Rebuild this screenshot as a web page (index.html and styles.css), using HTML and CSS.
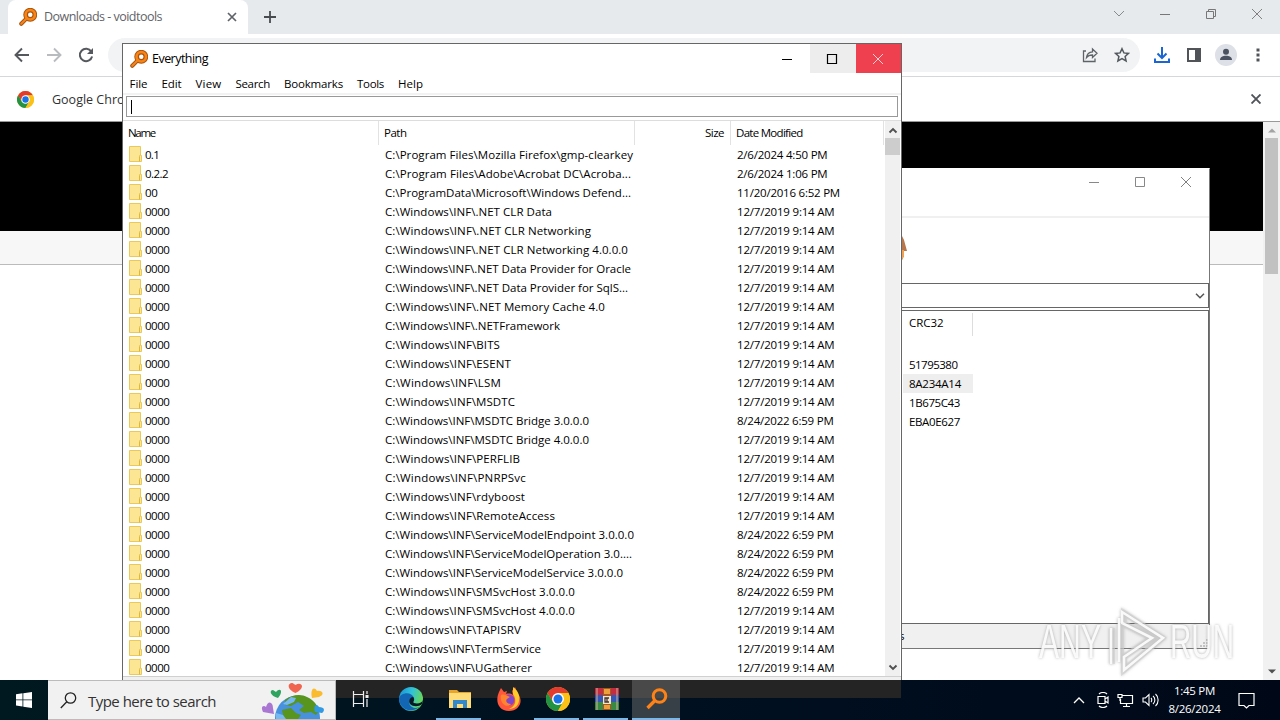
FILE: index.html
```html
<!DOCTYPE html>
<html lang="en">
<head>
<meta charset="utf-8">
<title>Desktop</title>
<link rel="stylesheet" href="styles.css">
</head>
<body>
<svg width="0" height="0" class="defs">
  <defs>
    <symbol id="lens" viewBox="0 0 16 16"><path d="M2 14 7 9" stroke="#a8540f" stroke-width="3.600" stroke-linecap="round"/><circle cx="10" cy="6" r="4.100" fill="#fff" stroke="#a8540f" stroke-width="4.200"/><path d="M2 14 7 9" stroke="#f5851c" stroke-width="1.800" stroke-linecap="round"/><circle cx="10" cy="6" r="4.200" fill="none" stroke="#f98414" stroke-width="2.300"/></symbol>
    <symbol id="chrome" viewBox="0 0 24 24"><circle cx="12" cy="12" r="12" fill="#fbc116"/><path d="M1.600 6A12 12 0 0 1 22.400 6L12 6.500 6.800 15z" fill="#e33b2e"/><path d="M1.600 6A12 12 0 0 0 12 24l5-9-10 0z" fill="#229342"/><path d="M22.400 6H12v6l5.200 3L12 24A12 12 0 0 0 22.400 6z" fill="#fbc116"/><circle cx="12" cy="12" r="6" fill="#fff"/><circle cx="12" cy="12" r="4.500" fill="#1a73e8"/></symbol>
    <symbol id="x" viewBox="0 0 12 12"><path d="M1 1l10 10M11 1L1 11" fill="none" stroke="currentColor"/></symbol>
  </defs>
</svg>
<div class="desktop">
  <section class="browser">
    <div class="tabs">
      <div class="tab"><svg class="i18"><use href="#lens"/></svg><span class="tab-title" data-w="118">Downloads - voidtools</span><svg class="tab-x" viewBox="0 0 10 10"><path d="M1 1l8 8M9 1L1 9" stroke="#5f6368" stroke-width="1.700"/></svg></div>
      <svg class="plus" viewBox="0 0 12 12"><path d="M6 0v12M0 6h12" stroke="#484c50" stroke-width="1.800"/></svg>
      <div class="frame">
        <svg width="12" height="12" viewBox="0 0 12 12"><path d="M1 3l5 5 5-5" fill="none" stroke="#888b8e"/></svg>
        <svg width="12" height="12" viewBox="0 0 12 12"><path d="M1 6.500h10" stroke="#777"/></svg>
        <svg width="12" height="12" viewBox="0 0 12 12"><path d="M1.500 3.500h7v7h-7zM3.500 3.500v-2h7v7h-2" fill="none" stroke="#777"/></svg>
        <svg width="12" height="12" class="dim"><use href="#x"/></svg>
      </div>
    </div>
    <div class="toolbar">
      <svg width="16" height="16" viewBox="0 0 16 16"><path d="M15 8H2M8 1.500L1.500 8 8 14.500" fill="none" stroke="#55595e" stroke-width="1.900"/></svg>
      <svg width="16" height="16" viewBox="0 0 16 16"><path d="M1 8h13M8 1.500L14.500 8 8 14.500" fill="none" stroke="#b9bcbf" stroke-width="1.900"/></svg>
      <svg width="16" height="16" viewBox="0 0 16 16"><path d="M13.300 4.600A6.200 6.200 0 1 0 14.100 9.500" fill="none" stroke="#55595e" stroke-width="2"/><path d="M15 1v6H9z" fill="#55595e"/></svg>
      <div class="omnibox">
        <svg width="17" height="16" viewBox="0 0 17 16"><path d="M4 4H1.500v10.500h11.500v-3M4.500 10.500c.5-4 3-5.500 6-5.700V2l4.500 4.300-4.500 4.200V8c-2.500 0-4.500.5-6 2.500z" fill="none" stroke="#5f6368" stroke-width="1.300"/></svg>
        <svg width="16" height="16" viewBox="0 0 16 16"><path d="M8 1.700l1.900 4.200 4.600.5-3.400 3.100 1 4.500L8 11.700 3.900 14l1-4.500L1.500 6.400l4.600-.5z" fill="none" stroke="#55595e" stroke-width="1.500"/></svg>
      </div>
      <svg class="dl" width="18" height="18" viewBox="0 0 18 18"><path d="M9 1v11M4.500 7.500L9 12l4.500-4.500M2 12.500V16h14v-3.500" fill="none" stroke="#1b66d2" stroke-width="2"/></svg>
      <svg class="panel" width="14" height="14" viewBox="0 0 14 14"><path d="M1 1h12v12H1z" fill="none" stroke="#505459" stroke-width="2"/><path d="M8 1h5v12H8z" fill="#505459"/></svg>
      <svg class="person" width="22" height="22" viewBox="0 0 22 22"><circle cx="11" cy="11" r="11" fill="#dde0e6"/><circle cx="11" cy="7.700" r="3" fill="#4b5261"/><path d="M5 16c0-3 3-4.200 6-4.200s6 1.200 6 4.200z" fill="#4b5261"/></svg>
      <svg class="dots" width="4" height="14" viewBox="0 0 4 14"><path d="M.5.5h3v3h-3zM.5 5.500h3v3h-3zM.5 10.500h3v3h-3z" fill="#505459"/></svg>
    </div>
    <div class="infobar"><svg class="i17"><use href="#chrome"/></svg><span>Google Chrome</span><svg class="info-x" viewBox="0 0 10 10"><path d="M.5.5l9 9M9.500.5l-9 9" stroke="#505459" stroke-width="1.900"/></svg></div>
    <div class="view">
      <div class="site"><div class="hero"></div><div class="strip"></div></div>
      <div class="page-scroll"><svg width="8" height="5" viewBox="0 0 8 5"><path d="M0 4.500L4 .5l4 4z" fill="#a3a3a3"/></svg><div class="page-thumb"></div><svg width="8" height="5" viewBox="0 0 8 5"><path d="M0 .5l4 4 4-4z" fill="#505050"/></svg></div>
    </div>
  </section>

  <section class="archive">
    <div class="a-title">
      <svg width="12" height="12" viewBox="0 0 12 12"><path d="M1 6.500h10" stroke="#888"/></svg>
      <svg width="12" height="12" viewBox="0 0 12 12"><path d="M1.500 1.500h9v9h-9z" fill="none" stroke="#888"/></svg>
      <svg width="12" height="12" class="dim"><use href="#x"/></svg>
    </div>
    <div class="a-tools"><svg width="6" height="24" viewBox="0 0 6 24"><path d="M0 0l2 4 3 11H2v5l-2 4z" fill="#b8764c"/><path d="M0 14h2v6l-2 4z" fill="#f0a050"/></svg></div>
    <div class="a-combo"><svg width="10" height="6" viewBox="0 0 10 6"><path d="M1 .7l4 4 4-4" fill="none" stroke="#555" stroke-width="1.500"/></svg></div>
    <div class="a-list">
      <div class="a-head"><span data-w="34.500">CRC32</span></div>
      <div class="a-row"><span data-w="48.500">51795380</span></div>
      <div class="a-row sel"><span data-w="52">8A234A14</span></div>
      <div class="a-row"><span data-w="51">1B675C43</span></div>
      <div class="a-row"><span data-w="51">EBA0E627</span></div>
    </div>
    <div class="a-status"><span>s</span><svg width="10" height="10" viewBox="0 0 10 10"><path d="M1 7h2v2H1zM4 7h2v2H4zM7 7h2v2H7zM4 4h2v2H4zM7 4h2v2H7zM7 1h2v2H7z" fill="#c4c4c4"/></svg></div>
  </section>

  <section class="everything">
    <div class="titlebar"><svg class="i18"><use href="#lens"/></svg><span data-w="56">Everything</span>
      <div class="btn"><svg width="12" height="12" viewBox="0 0 12 12"><path d="M1 6.500h10" stroke="#000"/></svg></div>
      <div class="btn hover"><svg width="12" height="12" viewBox="0 0 12 12"><path d="M1.500 1.500h9v9h-9z" fill="none" stroke="#000" stroke-width="1.200"/></svg></div>
      <div class="btn close"><svg width="12" height="12"><use href="#x"/></svg></div>
    </div>
    <div class="menu"><span data-w="18">File</span><span data-w="20">Edit</span><span data-w="26">View</span><span data-w="34.500">Search</span><span data-w="59">Bookmarks</span><span data-w="27">Tools</span><span data-w="25">Help</span></div>
    <div class="query"><i></i></div>
    <div class="results">
      <div class="table">
        <div class="cols head"><div><span data-w="27">Name</span></div><div><span data-w="22.500">Path</span></div><div class="size"><span data-w="19">Size</span></div><div><span data-w="66.500">Date Modified</span></div></div>
        <div id="rows"></div>
      </div>
      <div class="scroll"><svg width="10" height="7" viewBox="0 0 10 7"><path d="M1.500 5.500L5 2l3.500 3.500" fill="none" stroke="#505050" stroke-width="1.900"/></svg><div class="thumb"></div><svg width="10" height="7" viewBox="0 0 10 7"><path d="M1.500 1.500L5 5l3.500-3.500" fill="none" stroke="#505050" stroke-width="1.900"/></svg></div>
    </div>
    <div class="status"></div>
  </section>

  <svg class="watermark" width="200" height="70" viewBox="0 0 200 70">
    <g class="letters"><text x="3" y="52" textLength="62" lengthAdjust="spacingAndGlyphs">ANY</text><text x="134" y="52" textLength="64" lengthAdjust="spacingAndGlyphs">RUN</text></g>
    <g fill="none" stroke="#d0d0d0" stroke-width="6" stroke-opacity=".6"><path d="M76 22v36M85 12v44M88 7l38 25-38 32V51l28-19-28-14z"/></g>
    <g fill="none" stroke="#fff" stroke-width="2.600" stroke-opacity=".9"><path d="M75 22v36M83 12v44M86 6l41 26-39 32V51l28-19-30-15z"/></g>
  </svg>

  <footer class="taskbar">
    <div class="start"><svg width="16" height="16" viewBox="0 0 16 16"><path d="M0 2.300l6.500-1v6.200H0zM7.300 1.200L16 0v7.500H7.300zM0 8.300h6.500v6.200l-6.500-1zM7.300 8.300H16V16l-8.700-1.300z" fill="#fff"/></svg></div>
    <div class="search"><svg width="17" height="17" viewBox="0 0 17 17"><circle cx="10.500" cy="6" r="5.200" fill="none" stroke="#222" stroke-width="1.300"/><path d="M6.800 9.800L.8 16" stroke="#222" stroke-width="1.300"/></svg><span data-w="128">Type here to search</span>
      <svg class="earth" width="64" height="38" viewBox="0 0 64 38"><circle cx="36.500" cy="37" r="22.500" fill="#4791df"/><path d="M24 19c7-6 17-6 22-3 7 3 11 9 12 14l-3 4-5-3-7 1-5-3 5-4-6-4-7 4-6-1zM21 29l9-2 5 5 5 2-3 4H23z" fill="#57951f"/><path d="M30 16l5 1-2 4-7 3-4-1z" fill="#76b9f2"/><path d="M15 32l7 2 3 4H15z" fill="#76b9f2"/><path d="M34.500 12c-9-4-8-10-3-10l3 2c6-4 11 3 0 8z" fill="#f0654f"/><path d="M17 17c-8-2-9-8-5-8l3 2c4-5 8-1 2 6z" fill="#2fa45f"/><path d="M51 17c-2-9 2-12 5-7 6-1 8 4 2 6z" fill="#fbbb2f"/><path d="M2 31c-3-6 1-7 3-5 2-7 7-5 7 1l1 6z" fill="#a977d2"/><path d="M54 31c-2-7 2-9 4-5 6 0 6 4 3 6z" fill="#3299e4"/></svg>
    </div>
    <div class="apps">
      <div><svg width="17" height="16" viewBox="0 0 17 16"><path d="M1.500 0v3.500h10V0M1.500 16v-3.500h10V16M1.500 3.500v9M11.500 3.500v9M15 0v3M15 8v8" fill="none" stroke="#eee" stroke-width="1.200"/><path d="M13.500 4h3v3h-3z" fill="#eee"/></svg></div>
      <div><svg width="24" height="24" viewBox="0 0 24 24"><defs><linearGradient id="e" x2="1" y2=".3"><stop stop-color="#168fd8"/><stop offset=".55" stop-color="#31c3d8"/><stop offset="1" stop-color="#65d75d"/></linearGradient></defs><circle cx="12" cy="12" r="12" fill="url(#e)"/><path d="M0 12C1 5 13 4 15 11c-5-1-7 6-2 9 3 2 7 1 9-2A12 12 0 0 1 0 12z" fill="#1266b4"/><path d="M14 10c3 3-1 5 1 6 4 1 8 0 9-3l-1 4c-3 3-9 3-12 0-2-3 0-7 3-7z" fill="#081a26"/></svg></div>
      <div class="on"><svg width="22" height="20" viewBox="0 0 22 20"><path d="M0 1h8l2 2h12v16H0z" fill="#e8a52e"/><path d="M0 4h22v15H0z" fill="#ffdc78"/><path d="M4 19v-8h14v8h-4v-4H8v4z" fill="#3288ca"/></svg></div>
      <div><svg width="24" height="24" viewBox="0 0 24 24"><path d="M2 5l2-4 3 4 3-1-1 3c3-1 6 0 7 1l-1-4 3-4 3 7c6 7 1 17-9 17C1 24-2 14 2 5z" fill="#ff563c"/><path d="M16 0c5 4 7 8 6 14-1 6-6 8-10 8 7-3 8-9 4-15z" fill="#ffcb2b"/><circle cx="12" cy="13" r="5.500" fill="#8147c7"/><path d="M4 8c3-1 5 0 9 2l-3 2c-2 2 0 5 4 5-4 5-12-1-10-9z" fill="#ff8430"/></svg></div>
      <div class="on"><svg width="24" height="24"><use href="#chrome"/></svg></div>
      <div class="on"><svg width="24" height="22" viewBox="0 0 24 22"><path d="M0 0h24v7H0z" fill="#c52c40"/><path d="M0 7h24v7H0z" fill="#3658b4"/><path d="M0 14h24v8H0z" fill="#388a42"/><path d="M2 0v22M22 0v22" stroke="#d0b0a0" stroke-width="1"/><path d="M8 0h8v22H8z" fill="#a75822"/><path d="M9 1h6v5H9zM9 17h6v4H9z" fill="#eda13d"/><path d="M8 8h8v8H8z" fill="#f5e6c8"/><path d="M14 10h-4v4h4M12 10v4" fill="none" stroke="#433" stroke-width="1.300"/></svg></div>
      <div class="on active"><svg width="24" height="24" viewBox="0 0 24 24"><circle cx="14.500" cy="9" r="6.300" fill="none" stroke="#ff8216" stroke-width="3"/><path d="M10 13.500L2.500 21" stroke="#ff8216" stroke-width="3.300"/></svg></div>
    </div>
    <div class="tray">
      <svg width="12" height="8" viewBox="0 0 12 8"><path d="M1 7l5-5 5 5" fill="none" stroke="#fff" stroke-width="1.300"/></svg>
      <svg width="12" height="16" viewBox="0 0 12 16"><path d="M1 4.500h7v7H1zM8 7l3-2v6l-3-2M2 2c2-2 6-2 8 0M2 14c2 2 6 2 8 0" fill="none" stroke="#fff" stroke-width="1.200"/></svg>
      <svg width="17" height="15" viewBox="0 0 17 15"><path d="M5.500 2.500h10v8h-12V6M9.500 11v3M6 13.500h7M1 1.500h4v3H1zM3 5v3" fill="none" stroke="#fff" stroke-width="1.200"/></svg>
      <svg width="17" height="14" viewBox="0 0 17 14"><path d="M1 5h2.500L7 1.500v11L3.500 9H1zM9 5c1 1 1 3 0 4M11 3c2.500 2 2.500 6 0 8M13.500 1c3.500 3 3.500 9 0 12" fill="none" stroke="#fff" stroke-width="1.100"/></svg>
      <div class="clock"><span data-w="41">1:45 PM</span><span data-w="52">8/26/2024</span></div>
      <svg class="note" width="17" height="17" viewBox="0 0 17 17"><path d="M1 1.500h15v12h-5l-2.500 2.500L6 13.500H1z" fill="none" stroke="#fff" stroke-width="1.200"/></svg>
    </div>
  </footer>
</div>
<script src="app.js"></script>
</body>
</html>
```
FILE: styles.css
```css
* { box-sizing: border-box; }
body { margin: 0; font: 11.5px/18px "Open Sans", "Noto Sans", sans-serif; color: #000; }
svg { display: block; flex: none; }
span { white-space: pre; }
.defs { position: absolute; }
.i18 { width: 18px; height: 18px; fill: none; }
.i17 { width: 17px; height: 17px; }
.dim { color: #808080; }
.desktop { position: relative; width: 1280px; height: 720px; overflow: hidden; background: #fff; }

.browser { height: 680px; display: flex; flex-direction: column; }
.tabs { height: 34px; background: #e7eaed; display: flex; align-items: center; padding-left: 8px; }
.tab { width: 240px; height: 34px; background: #fff; border-radius: 8px 8px 0 0; display: flex; align-items: center; padding: 0 11px; }
.tab-title { margin-left: 7px; color: #5f6368; font-size: 12.5px; width: 183px; }
.tab-x { width: 10px; height: 10px; }
.plus { width: 12px; height: 12px; margin-left: 16px; }
.frame { margin: -6px 17px 0 auto; display: flex; gap: 34px; }
.toolbar { height: 43px; border-bottom: 1px solid #d5d7da; display: flex; align-items: center; padding-left: 14px; gap: 16px; }
.omnibox { width: 1032px; height: 34px; margin: -1px 0 0 -2px; border-radius: 17px; background: #f1f3f4; display: flex; justify-content: flex-end; align-items: center; gap: 15px; padding-right: 10px; }
.dl { margin-left: -3px; }
.panel { margin-left: 0; }
.person { margin-left: -2px; }
.dots { margin-left: 3px; }
.infobar { height: 45px; display: flex; align-items: center; padding: 0 19px 0 17px; color: #303134; border-bottom: 1px solid #999; }
.infobar span { margin-left: 18px; font-size: 12.5px; padding-top: 1px; }
.info-x { width: 10px; height: 10px; margin-left: auto; }
.view { flex: 1; display: flex; }
.site { flex: 1; }
.hero { height: 109px; background: #000; }
.strip { height: 34px; background: #f7f7f7; border-bottom: 1px solid #bbb; }
.page-scroll { width: 17px; background: #f1f1f1; display: flex; flex-direction: column; align-items: center; padding: 6px 0; }
.page-thumb { width: 13px; height: 136px; background: #c1c1c1; margin: 5px 0 auto; }

.archive { position: absolute; left: 860px; top: 168px; width: 350px; height: 481px; background: #fff; border: 1px solid #777; border-top-color: #fff; display: flex; flex-direction: column; }
.a-title { height: 49px; border-bottom: 2px solid #f0f0f0; display: flex; justify-content: flex-end; gap: 34px; padding: 7px 17px 0; }
.a-tools { height: 65px; padding: 18px 0 0 41px; }
.a-combo { height: 25px; border: 1px solid #666; display: flex; align-items: center; justify-content: flex-end; padding-right: 3px; }
.a-list { height: 314px; margin-top: 2px; border: 1px solid #666; padding: 2px 0 0 41px; }
.a-head { height: 23px; width: 70px; border-right: 1px solid #ddd; padding: 1px 0 0 6px; margin-bottom: 19px; }
.a-row { height: 19px; width: 70px; padding-left: 6px; line-height: 19px; }
.sel { background: #eee; }
.a-status { flex: 1; background: #f0f0f0; display: flex; justify-content: space-between; align-items: center; padding-left: 38px; }
.a-status svg { align-self: flex-end; }

.everything { position: absolute; left: 122px; top: 43px; width: 780px; height: 656px; background: #fff; border: 1px solid #666; display: flex; flex-direction: column; }
.titlebar { height: 29px; display: flex; align-items: center; padding-left: 7px; font-size: 12.5px; }
.titlebar > span { margin-left: 4px; margin-right: auto; padding-top: 1px; }
.btn { width: 46px; height: 29px; display: grid; place-items: center; }
.hover { background: #ededed; padding-right: 2px; }
.close { width: 45px; background: #ef4050; color: #fbd0d4; padding-right: 2px; }
.menu { height: 22px; border-bottom: 2px solid #f2f2f2; display: flex; gap: 14px; padding: 2px 7px 0 6.5px; }
.query { height: 21px; margin: 1px 3px 3px; border: 1px solid #999; padding: 3px 4px; }
.query i { display: block; width: 1px; height: 14px; background: #000; }
.results { height: 556px; border-top: 1px solid #ddd; display: flex; overflow: hidden; }
.table { width: 762px; }
.cols { display: grid; grid-template-columns: 256px 256px 96px 153px; }
.head { height: 24px; line-height: 24px; }
.head > div { border-right: 1px solid #e2e2e2; padding-left: 5px; }
.head > .size { text-align: right; padding-right: 6px; }
.row { height: 19px; line-height: 19px; }
.row > div { padding-left: 6px; display: flex; align-items: center; }
.row svg { margin: -2px 3px 0 0; }
.scroll { width: 15px; background: #f0f0f0; display: flex; flex-direction: column; align-items: center; padding: 6px 0 5px; }
.thumb { width: 15px; height: 17px; background: #cdcdcd; margin: 4px 0 auto; }
.status { flex: 1; background: #f0f0f0; border-top: 1px solid #d0d0d0; }

.watermark { position: absolute; left: 1036px; top: 606px; filter: drop-shadow(0 0 1.5px rgba(120,120,120,.6)); }
.letters { font: 48px "Liberation Sans", sans-serif; fill: #fff; fill-opacity: .9; }

.taskbar { position: absolute; left: 0; top: 680px; width: 1280px; height: 40px; background: linear-gradient(90deg, #001820, #000f20 60%, #000817); display: flex; }
.taskbar::before { content: ""; position: absolute; left: 122px; top: 0; width: 779px; height: 18px; background: #242424; }
.start { width: 48px; display: grid; place-items: center; }
.search { position: relative; width: 288px; background: #f1f1f1; border: 1px solid #bbb; border-left: 0; display: flex; align-items: center; padding-left: 12px; font-size: 15px; color: #333; }
.search span { margin-left: 11px; padding-top: 1px; }
.earth { margin: 0 10px 0 auto; }
.apps { position: relative; display: flex; }
.apps > div { width: 49px; display: grid; place-items: center; border-bottom: 2px solid transparent; padding-left: 2px; }
.apps > .on { border-image: linear-gradient(90deg, transparent 4px, #76b9ed 4px, #76b9ed 45px, transparent 45px) 2; }
.apps > .active { width: 50px; margin-left: 2px; width: 48px; background: rgba(110,110,110,.5); border-image: linear-gradient(#76b9ed, #76b9ed) 2; }
.apps > :first-child { padding-left: 0; }
.tray { position: relative; margin-left: auto; display: flex; align-items: center; gap: 8px; padding-right: 25px; color: #fff; }
.tray svg:first-child { margin-right: 4px; }
.clock { width: 55px; text-align: center; display: flex; flex-direction: column; align-items: center; }
.note { margin-left: 8px; }
```
FILE: app.js
```js
const rows = [
  ["0.1", "Program Files\\Mozilla Firefox\\gmp-clearkey", 633, "2/6/2024 4:50 PM"],
  ["0.2.2", "Program Files\\Adobe\\Acrobat DC\\Acroba...", 631, "2/6/2024 1:06 PM"],
  ["00", "ProgramData\\Microsoft\\Windows Defend...", 631, "11/20/2016 6:52 PM"],
  ["0000", ".NET CLR Data", 552],
  ["0000", ".NET CLR Networking", 591],
  ["0000", ".NET CLR Networking 4.0.0.0", 628],
  ["0000", ".NET Data Provider for Oracle", 631],
  ["0000", ".NET Data Provider for SqlS...", 628],
  ["0000", ".NET Memory Cache 4.0", 605],
  ["0000", ".NETFramework", 560],
  ["0000", "BITS", 500],
  ["0000", "ESENT", 511],
  ["0000", "LSM", 501],
  ["0000", "MSDTC", 515],
  ["0000", "MSDTC Bridge 3.0.0.0", 589, "8/24/2022 6:59 PM"],
  ["0000", "MSDTC Bridge 4.0.0.0", 589],
  ["0000", "PERFLIB", 520],
  ["0000", "PNRPSvc", 526],
  ["0000", "rdyboost", 525],
  ["0000", "RemoteAccess", 555],
  ["0000", "ServiceModelEndpoint 3.0.0.0", 634, "8/24/2022 6:59 PM"],
  ["0000", "ServiceModelOperation 3.0....", 632, "8/24/2022 6:59 PM"],
  ["0000", "ServiceModelService 3.0.0.0", 623, "8/24/2022 6:59 PM"],
  ["0000", "SMSvcHost 3.0.0.0", 575, "8/24/2022 6:59 PM"],
  ["0000", "SMSvcHost 4.0.0.0", 575],
  ["0000", "TAPISRV", 521],
  ["0000", "TermService", 541],
  ["0000", "UGatherer", 532]
];
const nameWidth = { "0.1": 14, "0.2.2": 23, "00": 12.5, "0000": 24.5 };
const dateWidth = { "2": 90.5, "1": 97.5, "8": 96.5 };
const folder = '<svg width="13" height="16" viewBox="0 0 13 16"><path d="M.5.5h11v8l1 1v6H.5z" fill="#fce693" stroke="#e8c95a"/><path d="M10.500 15.500v-5l1-2" fill="none" stroke="#dcb83c"/></svg>';

document.getElementById("rows").innerHTML = rows.map(([name, path, end, date], i) => {
  const full = "C:\\" + (i < 3 ? path : "Windows\\INF\\" + path);
  const when = date || "12/7/2019 9:14 AM";
  const dw = i === 2 ? 103 : dateWidth[when[0]];
  return `<div class="cols row"><div>${folder}<span data-w="${nameWidth[name]}">${name}</span></div><div><span data-w="${end - 385}">${full}</span></div><div></div><div><span data-w="${dw}">${when}</span></div></div>`;
}).join("");

// Adjust tracking so each label occupies its nominal width.
for (const el of document.querySelectorAll("[data-w]")) {
  const range = document.createRange();
  range.selectNodeContents(el);
  const natural = range.getBoundingClientRect().width;
  el.style.letterSpacing = (el.dataset.w - natural) / el.textContent.length + "px";
}
```
